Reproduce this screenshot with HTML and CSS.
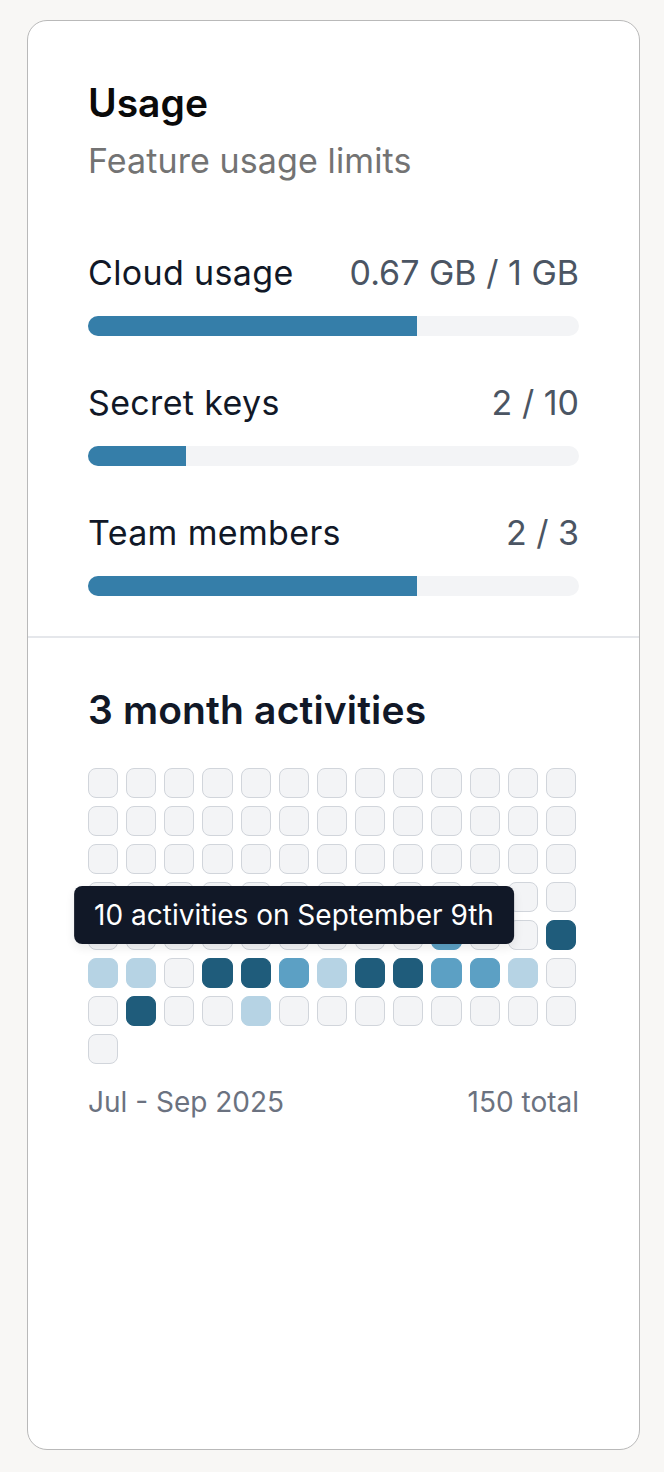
FILE: index.html
```html
<!DOCTYPE html>
<html lang="en">
<head>
<meta charset="utf-8">
<title>Usage</title>
<link rel="stylesheet" href="styles.css">
</head>
<body>
<div class="page">
  <section class="card">
    <div class="usage">
      <h1 class="title">Usage</h1>
      <p class="subtitle">Feature usage limits</p>
      <div class="meters">
        <div class="meter">
          <div class="meter-head"><span class="label">Cloud usage</span><span class="value">0.67 GB / 1 GB</span></div>
          <div class="track"><div class="fill" style="width:67%"></div></div>
        </div>
        <div class="meter">
          <div class="meter-head"><span class="label">Secret keys</span><span class="value">2 / 10</span></div>
          <div class="track"><div class="fill" style="width:20%"></div></div>
        </div>
        <div class="meter">
          <div class="meter-head"><span class="label">Team members</span><span class="value">2 / 3</span></div>
          <div class="track"><div class="fill" style="width:67%"></div></div>
        </div>
      </div>
    </div>
    <div class="activity">
      <h2 class="heading">3 month activities</h2>
      <div class="grid-wrap">
        <div class="grid">
          <div class="cell"></div><div class="cell"></div><div class="cell"></div><div class="cell"></div><div class="cell"></div><div class="cell"></div><div class="cell"></div><div class="cell"></div><div class="cell"></div><div class="cell"></div><div class="cell"></div><div class="cell"></div><div class="cell"></div>
          <div class="cell"></div><div class="cell"></div><div class="cell"></div><div class="cell"></div><div class="cell"></div><div class="cell"></div><div class="cell"></div><div class="cell"></div><div class="cell"></div><div class="cell"></div><div class="cell"></div><div class="cell"></div><div class="cell"></div>
          <div class="cell"></div><div class="cell"></div><div class="cell"></div><div class="cell"></div><div class="cell"></div><div class="cell"></div><div class="cell"></div><div class="cell"></div><div class="cell"></div><div class="cell"></div><div class="cell"></div><div class="cell"></div><div class="cell"></div>
          <div class="cell"></div><div class="cell"></div><div class="cell"></div><div class="cell"></div><div class="cell"></div><div class="cell"></div><div class="cell"></div><div class="cell"></div><div class="cell"></div><div class="cell"></div><div class="cell"></div><div class="cell"></div><div class="cell"></div>
          <div class="cell"></div><div class="cell"></div><div class="cell"></div><div class="cell"></div><div class="cell"></div><div class="cell"></div><div class="cell"></div><div class="cell"></div><div class="cell"></div><div class="cell mid"></div><div class="cell"></div><div class="cell"></div><div class="cell dark"></div>
          <div class="cell light"></div><div class="cell light"></div><div class="cell"></div><div class="cell dark"></div><div class="cell dark"></div><div class="cell mid"></div><div class="cell light"></div><div class="cell dark"></div><div class="cell dark"></div><div class="cell mid"></div><div class="cell mid"></div><div class="cell light"></div><div class="cell"></div>
          <div class="cell"></div><div class="cell dark"></div><div class="cell"></div><div class="cell"></div><div class="cell light"></div><div class="cell"></div><div class="cell"></div><div class="cell"></div><div class="cell"></div><div class="cell"></div><div class="cell"></div><div class="cell"></div><div class="cell"></div>
          <div class="cell"></div>
        </div>
        <div class="tooltip">10 activities on September 9th</div>
      </div>
      <div class="foot"><span>Jul - Sep 2025</span><span>150 total</span></div>
    </div>
  </section>
</div>
</body>
</html>
```

FILE: styles.css
```css
* { box-sizing: border-box; }
html, body { margin: 0; padding: 0; }
body {
  background: #f8f7f5;
  font-family: Inter, "Noto Sans", sans-serif;
  color: #111827;
}
.page {
  height: 100vh;
  padding: 20px 24px 22px 27px;
}
.card {
  height: 100%;
  background: #fff;
  border: 1px solid #b9b9b9;
  border-radius: 20px;
}
.usage {
  padding: 58px 60px 40px;
  border-bottom: 2px solid #e5e7eb;
}
.title {
  margin: 0;
  font-size: 39px;
  line-height: 48px;
  font-weight: 600;
  color: #0a0a0a;
}
.subtitle {
  margin: 12px 0 0;
  font-size: 34px;
  line-height: 44px;
  color: #737373;
  letter-spacing: 0.1px;
}
.meters {
  margin-top: 68px;
  display: flex;
  flex-direction: column;
  gap: 45px;
}
.meter-head {
  display: flex;
  justify-content: space-between;
  font-size: 34px;
  line-height: 44px;
}
.label { color: #111827; letter-spacing: 0.35px; }
.value { color: #4b5563; }
.track {
  margin-top: 21px;
  height: 20px;
  border-radius: 10px;
  background: #f3f4f6;
  overflow: hidden;
}
.fill {
  height: 100%;
  background: #357ea9;
}
.activity {
  padding: 48px 60px 50px;
}
.heading {
  margin: 0;
  font-size: 39px;
  line-height: 48px;
  font-weight: 600;
  color: #111827;
  letter-spacing: 0.15px;
}
.grid-wrap {
  position: relative;
  margin-top: 34px;
}
.grid {
  width: 488px;
  display: grid;
  grid-template-columns: repeat(13, 1fr);
  grid-auto-rows: 30px;
  gap: 8px;
}
.cell {
  border: 1px solid #d1d5db;
  background: #f3f4f6;
  border-radius: 8px;
}
.cell.light { background: #b6d3e4; border-color: #b6d3e4; }
.cell.mid { background: #5ca0c4; border-color: #5ca0c4; }
.cell.dark { background: #1f5c7b; border-color: #1f5c7b; }
.tooltip {
  position: absolute;
  left: 206px;
  top: 118px;
  transform: translateX(-50%);
  white-space: nowrap;
  background: #111827;
  color: #fff;
  font-size: 28px;
  line-height: 58px;
  height: 58px;
  padding: 0 20px;
  border-radius: 8px;
  box-shadow: 0 4px 10px rgba(0, 0, 0, 0.08);
}
.foot {
  margin-top: 20px;
  display: flex;
  justify-content: space-between;
  font-size: 28px;
  line-height: 36px;
  color: #6b7280;
}
```
